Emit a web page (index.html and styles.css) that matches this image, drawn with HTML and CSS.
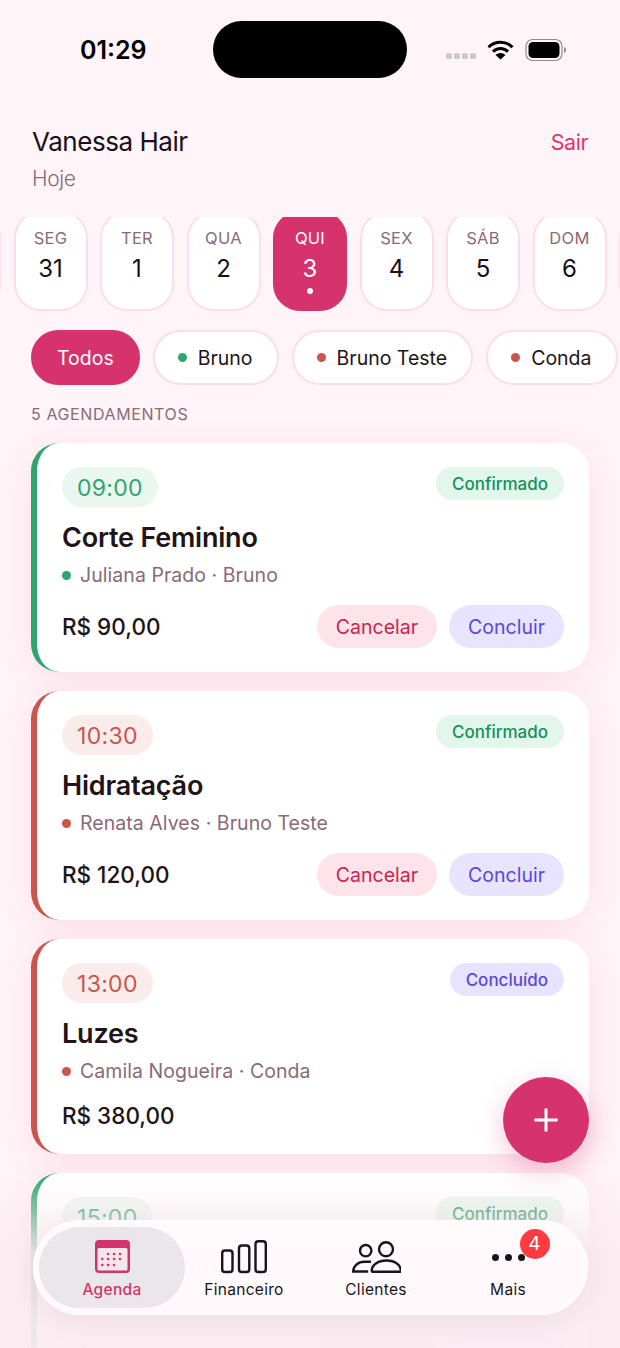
FILE: index.html
```html
<!DOCTYPE html>
<html lang="pt-BR">
<head>
    <meta charset="UTF-8">
    <meta name="viewport" content="width=device-width, initial-scale=1.0">
    <title>Agenda</title>
    <link rel="stylesheet" href="styles.css">
</head>

<body>
    <div class="screen">
        <div class="status-bar">
            <span class="clock">01:29</span>
            <div class="status-icons">
                <span class="signal"><i></i><i></i><i></i><i></i></span>
                <svg class="wifi" width="27" height="20" viewBox="0 0 27 20">
                    <path d="M1.5 7.2a17 17 0 0 1 24 0" fill="none" stroke="#000" stroke-width="3"/>
                    <path d="M6 11.6a10.6 10.6 0 0 1 15 0" fill="none" stroke="#000" stroke-width="3"/>
                    <path d="M13.5 19.5l-5-4.6a7.2 7.2 0 0 1 10 0z" fill="#000"/>
                </svg>
                <svg class="battery" width="42" height="24" viewBox="0 0 42 24">
                    <rect x="1" y="1.5" width="36" height="21" rx="6.5" fill="none" stroke="#8f8a8c" stroke-width="1.2"/>
                    <rect x="3.5" y="4" width="31" height="16" rx="4.5" fill="#000"/>
                    <path d="M39 9v6c1.400-.5 2-1.600 2-3s-.6-2.500-2-3z" fill="#8f8a8c"/>
                </svg>
            </div>
        </div>
        <div class="island"></div>

        <header class="top">
            <div>
                <h1>Vanessa Hair</h1>
                <p class="today">Hoje</p>
            </div>
            <a class="logout">Sair</a>
        </header>

        <div class="days">
            <div class="day day-edge"></div>
            <div class="day"><span>SEG</span><b>31</b></div>
            <div class="day"><span>TER</span><b>1</b></div>
            <div class="day"><span>QUA</span><b>2</b></div>
            <div class="day active"><span>QUI</span><b>3</b><i class="day-dot"></i></div>
            <div class="day"><span>SEX</span><b>4</b></div>
            <div class="day"><span>SÁB</span><b>5</b></div>
            <div class="day"><span>DOM</span><b>6</b></div>
            <div class="day day-edge"></div>
        </div>

        <div class="chips">
            <div class="chip active">Todos</div>
            <div class="chip"><i class="dot green"></i>Bruno</div>
            <div class="chip"><i class="dot red"></i>Bruno Teste</div>
            <div class="chip"><i class="dot red"></i>Conda</div>
        </div>

        <p class="count">5 AGENDAMENTOS</p>

        <div class="list">
            <div class="card green">
                <div class="card-top">
                    <span class="time">09:00</span>
                    <span class="badge ok">Confirmado</span>
                </div>
                <h2>Corte Feminino</h2>
                <p class="who"><i class="dot"></i>Juliana Prado · Bruno</p>
                <div class="card-bottom">
                    <span class="price">R$ 90,00</span>
                    <div class="actions">
                        <button class="btn cancel">Cancelar</button>
                        <button class="btn finish">Concluir</button>
                    </div>
                </div>
            </div>

            <div class="card red">
                <div class="card-top">
                    <span class="time">10:30</span>
                    <span class="badge ok">Confirmado</span>
                </div>
                <h2>Hidratação</h2>
                <p class="who"><i class="dot"></i>Renata Alves · Bruno Teste</p>
                <div class="card-bottom">
                    <span class="price">R$ 120,00</span>
                    <div class="actions">
                        <button class="btn cancel">Cancelar</button>
                        <button class="btn finish">Concluir</button>
                    </div>
                </div>
            </div>

            <div class="card red">
                <div class="card-top">
                    <span class="time">13:00</span>
                    <span class="badge done">Concluído</span>
                </div>
                <h2>Luzes</h2>
                <p class="who"><i class="dot"></i>Camila Nogueira · Conda</p>
                <div class="card-bottom plain">
                    <span class="price">R$ 380,00</span>
                </div>
            </div>

            <div class="card green">
                <div class="card-top">
                    <span class="time">15:00</span>
                    <span class="badge ok">Confirmado</span>
                </div>
                <h2>Corte Feminino</h2>
                <p class="who"><i class="dot"></i>Juliana Prado · Bruno</p>
                <div class="card-bottom">
                    <span class="price">R$ 90,00</span>
                    <div class="actions">
                        <button class="btn cancel">Cancelar</button>
                        <button class="btn finish">Concluir</button>
                    </div>
                </div>
            </div>
        </div>

        <div class="fade"></div>

        <button class="fab">
            <svg width="26" height="26" viewBox="0 0 26 26"><path d="M13 1.500v23M1.500 13h23" stroke="#fff" stroke-width="3"/></svg>
        </button>

        <nav class="tabs">
            <div class="tab active">
                <svg width="35" height="34" viewBox="0 0 35 34">
                    <rect width="35" height="33" rx="4" fill="#d6336c"/>
                    <rect x="2.500" y="8" width="30" height="22.500" rx="1.500" fill="#f3e6eb"/>
                    <g fill="#d6336c">
                        <circle cx="13" cy="14" r="1.300"/><circle cx="19" cy="14" r="1.300"/><circle cx="25" cy="14" r="1.300"/>
                        <circle cx="7.300" cy="19" r="1.300"/><circle cx="13" cy="19" r="1.300"/><circle cx="19" cy="19" r="1.300"/><circle cx="25" cy="19" r="1.300"/>
                        <circle cx="7.300" cy="25" r="1.300"/><circle cx="13" cy="25" r="1.300"/><circle cx="19" cy="25" r="1.300"/>
                    </g>
                </svg>
                <span>Agenda</span>
            </div>
            <div class="tab">
                <svg width="46" height="34" viewBox="0 0 46 34" fill="none" stroke="#16161a" stroke-width="2.400">
                    <rect x="1.200" y="10.500" width="10.300" height="21.500" rx="2.800"/>
                    <rect x="18" y="5.500" width="10.300" height="26.500" rx="2.800"/>
                    <rect x="34.500" y="1.200" width="10.300" height="30.800" rx="2.800"/>
                </svg>
                <span>Financeiro</span>
            </div>
            <div class="tab">
                <svg width="49" height="34" viewBox="0 0 49 34" fill="none" stroke="#16161a" stroke-width="2.400">
                    <circle cx="13.700" cy="10.700" r="5.700"/>
                    <circle cx="34" cy="9.300" r="7"/>
                    <path d="M19 21.800H12.500C6 21.800 1.200 26 1.200 31.500h15"/>
                    <path d="M34.500 20.500c-8.500 0-14.800 4.500-14.800 10.300 0 .6.400 1 1 1h27.100c.6 0 1-.4 1-1 0-5.800-5.800-10.300-14.300-10.300z"/>
                </svg>
                <span>Clientes</span>
            </div>
            <div class="tab">
                <div class="more">
                    <i></i><i></i><i></i>
                    <em class="notif">4</em>
                </div>
                <span>Mais</span>
            </div>
        </nav>
    </div>
</body>
</html>
```

FILE: styles.css
```css
* {
    box-sizing: border-box;
}

html, body {
    margin: 0;
    padding: 0;
}

body {
    font-family: Inter, "Noto Sans", sans-serif;
    color: #211318;
    background-color: #fff4f8;
}

.screen {
    position: relative;
    width: 620px;
    height: 1348px;
    overflow: hidden;
    background-color: #fff4f8;
}

/* status bar */
.status-bar {
    height: 100px;
    padding: 0 53px 0 80px;
    display: flex;
    justify-content: space-between;
    align-items: flex-start;
}

.clock {
    margin-top: 34px;
    font-size: 25px;
    line-height: 32px;
    font-weight: 600;
    color: #000;
}

.status-icons {
    margin-top: 38px;
    display: flex;
    align-items: center;
    gap: 11px;
}

.signal {
    display: flex;
    gap: 2px;
    margin-top: 11px;
}

.signal i {
    width: 6px;
    height: 6px;
    border-radius: 1.500px;
    background-color: #cfc8cb;
}

.island {
    position: absolute;
    left: 213px;
    top: 21px;
    width: 194px;
    height: 57px;
    border-radius: 29px;
    background-color: #000;
}

/* header */
.top {
    padding: 25px 32px 0;
    display: flex;
    justify-content: space-between;
    align-items: flex-start;
}

h1 {
    margin: 0;
    font-size: 26px;
    line-height: 34px;
    font-weight: 400;
    letter-spacing: -0.45px;
    color: #16101a;
}

.today {
    margin: 6px 0 0;
    font-size: 21px;
    line-height: 28px;
    font-weight: 300;
    letter-spacing: -0.4px;
    color: #8a6a75;
}

.logout {
    margin-top: 2px;
    font-size: 21.500px;
    line-height: 30px;
    font-weight: 400;
    letter-spacing: -0.5px;
    color: #e0356b;
}

/* days */
.days {
    margin-top: 24px;
    height: 94px;
    padding-left: 13.500px;
    display: flex;
    gap: 12.500px;
    align-items: flex-end;
    overflow: hidden;
    position: relative;
}

.day {
    flex: 0 0 74px;
    height: 100px;
    padding-top: 14px;
    border: 2px solid #fddde8;
    border-radius: 27px;
    background-color: #fff;
    display: flex;
    flex-direction: column;
    align-items: center;
}

.day-edge {
    margin-left: -86.500px;
}

.day-edge:last-child {
    margin-left: 0;
}

.day span {
    font-size: 16.500px;
    line-height: 22px;
    letter-spacing: 0.3px;
    color: #8a6a75;
}

.day b {
    margin-top: 5px;
    font-size: 24px;
    line-height: 30px;
    font-weight: 400;
    color: #16101a;
}

.day.active {
    background-color: #d6336c;
    border-color: #d6336c;
}

.day.active span,
.day.active b {
    color: #fff;
}

.day-dot {
    width: 6px;
    height: 6px;
    margin-top: 4px;
    border-radius: 50%;
    background-color: #fff;
}

/* chips */
.chips {
    margin: 19px 0 0 31px;
    display: flex;
    gap: 13px;
}

.chip {
    height: 55px;
    padding: 0 24px 0 23px;
    border: 2px solid #fddde8;
    border-radius: 28px;
    background-color: #fff;
    display: flex;
    align-items: center;
    font-size: 19.500px;
    white-space: nowrap;
    color: #211318;
}

.chip.active {
    padding: 0 24px;
    background-color: #d6336c;
    border-color: #d6336c;
    color: #fff;
}

.dot {
    width: 9px;
    height: 9px;
    margin-right: 11px;
    border-radius: 50%;
    flex: none;
}

.dot.green {
    background-color: #2ea56f;
}

.dot.red {
    background-color: #c9564c;
}

.count {
    margin: 19px 0 0 31px;
    font-size: 16px;
    line-height: 20px;
    letter-spacing: 0.6px;
    color: #8a6a75;
}

/* cards */
.list {
    margin: 19px 31px 0;
    display: flex;
    flex-direction: column;
    gap: 19px;
}

.card {
    padding: 24px 25px;
    border-left: 6px solid #2ea56f;
    border-radius: 28px;
    background-color: #fff;
    box-shadow: 0 8px 36px rgba(214, 51, 108, 0.1);
    --accent: #2ea56f;
    --accent-bg: #eaf6f0;
}

.card.red {
    border-left-color: #c9564c;
    --accent: #c9564c;
    --accent-bg: #f9ecea;
}

.card-top {
    display: flex;
    justify-content: space-between;
    align-items: flex-start;
}

.time {
    height: 40px;
    padding: 0 15px;
    border-radius: 20px;
    background-color: var(--accent-bg);
    color: var(--accent);
    font-size: 23px;
    line-height: 42px;
    letter-spacing: 0.3px;
}

.badge {
    height: 33px;
    padding: 0 16px;
    border-radius: 17px;
    font-size: 17px;
    line-height: 35px;
    font-weight: 500;
}

.badge.ok {
    background-color: #e3f6ec;
    color: #15905a;
}

.badge.done {
    background-color: #e8e4ff;
    color: #5a48dd;
}

h2 {
    margin: 14px 0 0;
    font-size: 27px;
    line-height: 34px;
    font-weight: 600;
    letter-spacing: -0.2px;
    color: #211318;
}

.who {
    margin: 6px 0 0;
    display: flex;
    align-items: center;
    font-size: 19.500px;
    line-height: 28px;
    letter-spacing: 0.05px;
    color: #8a6a75;
}

.who .dot {
    margin-right: 9px;
    background-color: var(--accent);
}

.card-bottom {
    margin-top: 16px;
    display: flex;
    justify-content: space-between;
    align-items: center;
}

.card-bottom.plain {
    margin-top: 15px;
    height: 30px;
}

.price {
    font-size: 22.500px;
    font-weight: 500;
    color: #211318;
}

.actions {
    display: flex;
    gap: 12px;
}

.btn {
    height: 43px;
    padding: 0 19px;
    border: none;
    border-radius: 22px;
    font-family: inherit;
    font-size: 19.500px;
}

.btn.cancel {
    background-color: #ffe3ea;
    color: #c9264f;
}

.btn.finish {
    background-color: #e8e4ff;
    color: #5a48dd;
}

/* things floating above the list */
.fade {
    position: absolute;
    left: 0;
    right: 0;
    bottom: 0;
    height: 175px;
    background: linear-gradient(to bottom, rgba(251, 236, 241, 0), rgba(251, 236, 241, 0.88) 45%, rgba(251, 236, 241, 0.95));
}

.fab {
    position: absolute;
    left: 503px;
    top: 1077px;
    width: 86px;
    height: 86px;
    border: none;
    border-radius: 50%;
    background-color: #d6336c;
    box-shadow: 0 8px 26px rgba(214, 51, 108, 0.28);
    display: flex;
    align-items: center;
    justify-content: center;
}

.tabs {
    position: absolute;
    left: 33px;
    top: 1220px;
    width: 555px;
    height: 95px;
    padding: 6px 13px;
    border-radius: 48px;
    background-color: rgba(255, 250, 252, 0.94);
    box-shadow: 0 6px 30px rgba(90, 40, 60, 0.08), inset 0 0 0 2px rgba(255, 255, 255, 0.6);
    display: flex;
}

.tab {
    flex: 0 0 132px;
    display: flex;
    flex-direction: column;
    align-items: center;
    padding-top: 14px;
    font-size: 15.500px;
    line-height: 20px;
    letter-spacing: 0.3px;
    color: #16161a;
}

.tab svg,
.more {
    height: 34px;
    margin-bottom: 6px;
}

.tab.active {
    flex: 0 0 146px;
    margin: 1px -7px 0;
    height: 81px;
    padding-top: 13px;
    border-radius: 41px;
    background-color: #ebe6e9;
    color: #d6336c;
    font-weight: 500;
}

.more {
    position: relative;
    display: flex;
    align-items: center;
    gap: 6px;
}

.more i {
    width: 7px;
    height: 7px;
    border-radius: 50%;
    background-color: #16161a;
}

.notif {
    position: absolute;
    left: 28px;
    top: -11px;
    width: 30px;
    height: 30px;
    border-radius: 50%;
    background-color: #ff3b3f;
    color: #fff;
    font-size: 19px;
    font-style: normal;
    font-weight: 400;
    letter-spacing: 0;
    line-height: 30px;
    text-align: center;
}
```
